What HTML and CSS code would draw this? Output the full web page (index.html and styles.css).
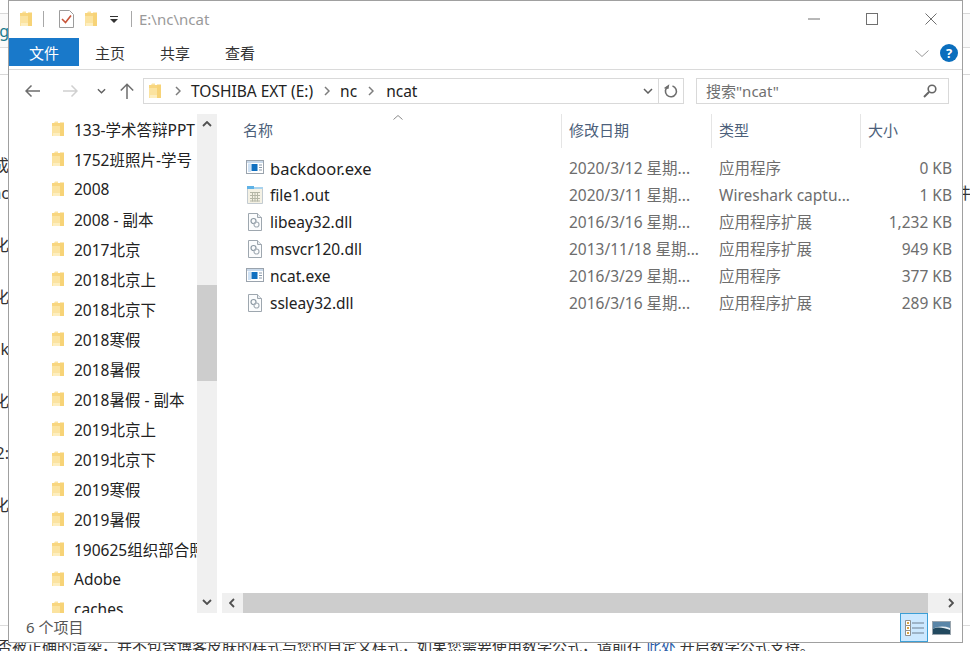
FILE: index.html
```html
<!DOCTYPE html>
<html lang="zh-CN">
<head>
<meta charset="utf-8">
<title>ncat</title>
<link rel="stylesheet" href="styles.css">
</head>
<body>
<svg class="defs" width="0" height="0" aria-hidden="true">
  <symbol id="folder" viewBox="0 0 12 16">
    <path d="M0 2h2l1-1.500h3v1.500h6v13H0z" fill="#fbe3a0"/>
    <path d="M0 2h12v3H0z" fill="#f8d680"/>
    <path d="M8 1.500h4V15H8z" fill="#f7d377"/>
    <path d="M1 12h7v3H1z" fill="#fdeebf"/>
  </symbol>
  <symbol id="exe" viewBox="0 0 18 14">
    <rect x=".5" y=".5" width="17" height="13" fill="#fff" stroke="#9aa3ad"/>
    <rect x="1" y="1" width="16" height="2" fill="#c9d9ea"/>
    <rect x="2" y="3.500" width="3" height="8.500" fill="#cfe2f5"/>
    <rect x="5.500" y="4" width="6" height="7" fill="#0f6fc0"/>
    <path d="M13 5h3M13 7.500h3M13 10h3" stroke="#8a98a8"/>
  </symbol>
  <symbol id="out" viewBox="0 0 16 18">
    <path d="M.5 2.500h15v15H.5z" fill="#f4f1e4" stroke="#c3cbd1"/>
    <rect x="0" y="0" width="7" height="3" fill="#5fb2e6"/>
    <rect x="7" y="1" width="9" height="2" fill="#a9d3ee"/>
    <path d="M3 6.500h10M3 9.500h10M3 12.500h10M3 15h10M5.500 6v9.500M8 6v9.500M10.500 6v9.500" stroke="#b4b6a6"/>
  </symbol>
  <symbol id="dll" viewBox="0 0 14 18">
    <path d="M.5.500h9l4 4v13H.5z" fill="#fbfcfd" stroke="#9ea7af"/>
    <path d="M9.500.500v4h4" fill="#e8ecef" stroke="#9ea7af"/>
    <circle cx="5.500" cy="8" r="2.500" fill="none" stroke="#8c98a3" stroke-width="1.200"/>
    <circle cx="8.500" cy="11.500" r="2.500" fill="none" stroke="#a7b0b8" stroke-width="1.200"/>
  </symbol>
  <symbol id="chev-r" viewBox="0 0 6 10"><path d="M1 1l4 4-4 4" fill="none" stroke="#7d7d7d" stroke-width="1.500"/></symbol>
  <symbol id="chev-d" viewBox="0 0 10 6"><path d="M1 1l4 4 4-4" fill="none" stroke="#5f5f5f" stroke-width="1.500"/></symbol>
</svg>

<div class="doc">
  <div class="doc-top"></div>
  <div class="doc-band"><span class="clip-left clip-g">g</span></div>
  <div class="doc-gap"></div>
  <div class="doc-lines">
    <div class="doc-line"><span class="clip-left">成</span></div>
    <div class="doc-line doc-tight"><span class="clip-left">nc</span><span class="clip-right">件</span></div>
    <div class="doc-line"><span class="clip-left">化</span></div>
    <div class="doc-line"><span class="clip-left">化</span></div>
    <div class="doc-line"><span class="clip-left">k</span></div>
    <div class="doc-line"><span class="clip-left">化</span></div>
    <div class="doc-line"><span class="clip-left">2:</span></div>
    <div class="doc-line"><span class="clip-left">化</span></div>
  </div>
  <div class="doc-foot">否被正确的渲染，并不包含博客皮肤的样式与您的自定义样式，如果您需要使用数学公式，请前往 <a class="doc-link">此处</a> 开启数学公式支持。</div>
</div>

<main class="win">
  <header class="titlebar">
    <svg class="ic-folder-t"><use href="#folder"/></svg>
    <span class="tb-sep tb-sep-a"></span>
    <svg class="ic-check" viewBox="0 0 15 18">
      <path d="M.5.500h10l4 4v13H.5z" fill="#fff" stroke="#9c9c9c"/>
      <path d="M3 9l3.500 3.500L12 5.500" fill="none" stroke="#c8553a" stroke-width="1.600"/>
    </svg>
    <svg class="ic-folder-t ic-folder-b"><use href="#folder"/></svg>
    <svg class="ic-qat" viewBox="0 0 8 7"><path d="M0 .500h8" stroke="#333"/><path d="M0 3h8L4 7z" fill="#333"/></svg>
    <span class="tb-sep tb-sep-b"></span>
    <span class="win-title">E:\nc\ncat</span>
    <svg class="ctl ctl-min" viewBox="0 0 12 12"><path d="M0 6h12" stroke="#707070"/></svg>
    <svg class="ctl ctl-max" viewBox="0 0 12 12"><rect x=".5" y=".5" width="11" height="11" fill="none" stroke="#707070"/></svg>
    <svg class="ctl ctl-close" viewBox="0 0 12 12"><path d="M.5.500l11 11M11.500.500l-11 11" stroke="#707070"/></svg>
  </header>

  <nav class="ribbon">
    <span class="tab tab-file">文件</span>
    <span class="tab">主页</span>
    <span class="tab">共享</span>
    <span class="tab">查看</span>
    <svg class="rb-chev" viewBox="0 0 14 7"><path d="M.5.500L7 6.500l6.500-6" fill="none" stroke="#9a9a9a"/></svg>
    <span class="help">?</span>
  </nav>

  <section class="toolbar">
    <svg class="nav nav-back" viewBox="0 0 15 12"><path d="M15 6H1M6.500.500L1 6l5.500 5.500" fill="none" stroke="#6d6d6d" stroke-width="1.500"/></svg>
    <svg class="nav nav-fwd" viewBox="0 0 15 12"><path d="M0 6h14M8.500.500L14 6l-5.500 5.500" fill="none" stroke="#d0d0d0" stroke-width="1.500"/></svg>
    <svg class="nav nav-down"><use href="#chev-d"/></svg>
    <svg class="nav nav-up" viewBox="0 0 14 16"><path d="M7 16V1.500M.8 7.500L7 1.200l6.200 6.300" fill="none" stroke="#6d6d6d" stroke-width="1.500"/></svg>
    <div class="address">
      <svg class="addr-folder"><use href="#folder"/></svg>
      <svg class="crumb-chev"><use href="#chev-r"/></svg>
      <span class="crumb">TOSHIBA EXT (E:)</span>
      <svg class="crumb-chev crumb-chev-mid"><use href="#chev-r"/></svg>
      <span class="crumb">nc</span>
      <svg class="crumb-chev crumb-chev-mid"><use href="#chev-r"/></svg>
      <span class="crumb crumb-last">ncat</span>
      <svg class="addr-drop"><use href="#chev-d"/></svg>
      <span class="addr-refresh">
        <svg class="refresh" viewBox="0 0 14 14"><path d="M8.500 2A5.500 5.500 0 1 1 4 2.600" fill="none" stroke="#6d6d6d" stroke-width="1.600"/><path d="M4.800 0v5H0z" fill="#6d6d6d" transform="rotate(10 4 3)"/></svg>
      </span>
    </div>
    <div class="search">
      <span class="search-text">搜索"ncat"</span>
      <svg class="search-ic" viewBox="0 0 14 14"><circle cx="9" cy="5" r="3.800" fill="none" stroke="#666" stroke-width="1.600"/><path d="M6 8l-5 5" stroke="#666" stroke-width="2"/></svg>
    </div>
  </section>

  <div class="panes">
    <aside class="tree">
      <ul class="tree-list">
        <li class="tree-row"><svg class="tree-ic"><use href="#folder"/></svg><span>133-学术答辩PPT</span></li>
        <li class="tree-row"><svg class="tree-ic"><use href="#folder"/></svg><span>1752班照片-学号</span></li>
        <li class="tree-row"><svg class="tree-ic"><use href="#folder"/></svg><span>2008</span></li>
        <li class="tree-row"><svg class="tree-ic"><use href="#folder"/></svg><span>2008 - 副本</span></li>
        <li class="tree-row"><svg class="tree-ic"><use href="#folder"/></svg><span>2017北京</span></li>
        <li class="tree-row"><svg class="tree-ic"><use href="#folder"/></svg><span>2018北京上</span></li>
        <li class="tree-row"><svg class="tree-ic"><use href="#folder"/></svg><span>2018北京下</span></li>
        <li class="tree-row"><svg class="tree-ic"><use href="#folder"/></svg><span>2018寒假</span></li>
        <li class="tree-row"><svg class="tree-ic"><use href="#folder"/></svg><span>2018暑假</span></li>
        <li class="tree-row"><svg class="tree-ic"><use href="#folder"/></svg><span>2018暑假 - 副本</span></li>
        <li class="tree-row"><svg class="tree-ic"><use href="#folder"/></svg><span>2019北京上</span></li>
        <li class="tree-row"><svg class="tree-ic"><use href="#folder"/></svg><span>2019北京下</span></li>
        <li class="tree-row"><svg class="tree-ic"><use href="#folder"/></svg><span>2019寒假</span></li>
        <li class="tree-row"><svg class="tree-ic"><use href="#folder"/></svg><span>2019暑假</span></li>
        <li class="tree-row"><svg class="tree-ic"><use href="#folder"/></svg><span>190625组织部合照</span></li>
        <li class="tree-row"><svg class="tree-ic"><use href="#folder"/></svg><span>Adobe</span></li>
        <li class="tree-row"><svg class="tree-ic"><use href="#folder"/></svg><span>caches</span></li>
      </ul>
      <div class="vscroll">
        <svg class="sb-arrow" viewBox="0 0 10 6"><path d="M1 5l4-4 4 4" fill="none" stroke="#505050" stroke-width="1.800"/></svg>
        <div class="vthumb"></div>
        <svg class="sb-arrow" viewBox="0 0 10 6"><path d="M1 1l4 4 4-4" fill="none" stroke="#505050" stroke-width="1.800"/></svg>
      </div>
    </aside>

    <section class="files">
      <div class="file-grid">
        <div class="hdr hdr-name">名称<svg class="sort" viewBox="0 0 10 5"><path d="M.5 4.500L5 .5l4.500 4" fill="none" stroke="#8a8a8a"/></svg></div>
        <div class="hdr">修改日期</div>
        <div class="hdr">类型</div>
        <div class="hdr hdr-last">大小</div>

        <div class="cell cell-name"><svg class="fi fi-exe"><use href="#exe"/></svg><span class="name-wide">backdoor.exe</span></div>
        <div class="cell">2020/3/12 星期...</div><div class="cell">应用程序</div><div class="cell cell-size">0 KB</div>

        <div class="cell cell-name"><svg class="fi fi-out"><use href="#out"/></svg>file1.out</div>
        <div class="cell">2020/3/11 星期...</div><div class="cell">Wireshark captu...</div><div class="cell cell-size">1 KB</div>

        <div class="cell cell-name"><svg class="fi fi-dll"><use href="#dll"/></svg>libeay32.dll</div>
        <div class="cell">2016/3/16 星期...</div><div class="cell">应用程序扩展</div><div class="cell cell-size">1,232 KB</div>

        <div class="cell cell-name"><svg class="fi fi-dll"><use href="#dll"/></svg>msvcr120.dll</div>
        <div class="cell">2013/11/18 星期...</div><div class="cell">应用程序扩展</div><div class="cell cell-size">949 KB</div>

        <div class="cell cell-name"><svg class="fi fi-exe"><use href="#exe"/></svg>ncat.exe</div>
        <div class="cell">2016/3/29 星期...</div><div class="cell">应用程序</div><div class="cell cell-size">377 KB</div>

        <div class="cell cell-name"><svg class="fi fi-dll"><use href="#dll"/></svg>ssleay32.dll</div>
        <div class="cell">2016/3/16 星期...</div><div class="cell">应用程序扩展</div><div class="cell cell-size">289 KB</div>
      </div>
      <div class="hscroll">
        <svg class="hs-arrow" viewBox="0 0 6 10"><path d="M5 1L1 5l4 4" fill="none" stroke="#505050" stroke-width="1.800"/></svg>
        <div class="hthumb"></div>
        <svg class="hs-arrow" viewBox="0 0 6 10"><path d="M1 1l4 4-4 4" fill="none" stroke="#505050" stroke-width="1.800"/></svg>
      </div>
    </section>
  </div>

  <footer class="status">
    <span class="status-text">6 个项目</span>
    <span class="view view-details">
      <svg class="view-ic" viewBox="0 0 19 16"><path d="M.5.500h5v5h-5zM.5 5.500h5v5h-5zM.5 10.500h5v5h-5z" fill="#fff" stroke="#8f8f8f"/><path d="M2 2h2v2H2zM2 7h2v2H2zM2 12h2v2H2z" fill="#d9a441"/><path d="M7 3h12M7 8h12M7 13h12" stroke="#6f7f8f"/></svg>
    </span>
    <span class="view view-thumb">
      <svg class="view-ic" viewBox="0 0 19 14"><rect x=".5" y=".5" width="18" height="13" fill="#e8f0f6" stroke="#9aa5ae"/><path d="M1 1h17v6C12 5 6 5 1 8z" fill="#5a86a8"/><path d="M1 8c5-3 11-1 17 1v4H1z" fill="#22495f"/></svg>
    </span>
  </footer>
</main>
</body>
</html>
```
FILE: styles.css
```css
* { box-sizing: border-box; }
html, body { margin: 0; height: 100%; }
body {
  position: relative;
  width: 970px;
  height: 651px;
  overflow: hidden;
  background: #fff;
  font-family: "Noto Sans", "Noto Sans CJK SC", sans-serif;
  color: #222;
}
.defs { position: absolute; }

/* page behind the window */
.doc { width: 970px; height: 651px; display: flex; flex-direction: column; overflow: hidden; font-size: 16px; color: #333; }
.doc-top { height: 14px; border-bottom: 1px solid #d8d8d8; flex: none; }
.doc-band { height: 34px; flex: none; background: #fafafa; border-bottom: 1px solid #dcdcdc; padding-top: 6px; display: flex; }
.doc-gap { height: 27px; flex: none; border-bottom: 1px solid #d8d8d8; }
.doc-lines { flex: 1; padding-top: 77px; display: flex; flex-direction: column; gap: 26px; border-bottom: 1px solid #dcdcdc; }
.doc-line { height: 26px; line-height: 26px; display: flex; justify-content: space-between; flex: none; }
.doc-tight { margin-top: -24px; }
.clip-left { width: 9px; display: flex; justify-content: flex-end; overflow: hidden; white-space: nowrap; color: #333; }
.clip-g { color: #1a7a8c; }
.clip-right { width: 16px; margin-right: -1px; }
.doc-foot { height: 25px; flex: none; padding-top: 10px; font-size: 15px; line-height: 20px; white-space: nowrap; margin-left: -3px; }
.doc-link { color: #2a5ca8; }

/* explorer window */
.win {
  position: absolute;
  left: 8px;
  top: 0;
  width: 955px;
  height: 643px;
  background: #fff;
  border: 1px solid #a0a0a0;
  display: flex;
  flex-direction: column;
  overflow: hidden;
  font-size: 15.500px;
}
.titlebar { height: 37px; flex: none; display: flex; align-items: center; padding: 0 0 1px 11px; }
.ic-folder-t { width: 12px; height: 16px; flex: none; }
.ic-folder-b { margin-left: 11px; }
.tb-sep { width: 1px; height: 16px; background: #a8a8a8; flex: none; }
.tb-sep-a { margin-left: 11px; }
.ic-check { width: 15px; height: 18px; flex: none; margin-left: 15px; }
.ic-qat { width: 8px; height: 7px; flex: none; margin-left: 13px; }
.tb-sep-b { margin-left: 13px; }
.win-title { margin-left: 7px; color: #9a9a9a; font-size: 15px; flex: 1; }
.ctl { width: 12px; height: 12px; flex: none; }
.ctl-max { margin-left: 46px; }
.ctl-close { margin-left: 47px; margin-right: 25px; }

.ribbon { height: 32px; flex: none; display: flex; align-items: flex-start; border-bottom: 1px solid #dadada; }
.tab { height: 28px; line-height: 30px; margin-left: 17px; margin-right: 18px; color: #333; white-space: nowrap; font-size: 15px; }
.tab-file { width: 70px; margin: 0 -1px 0 0; text-align: center; background: #1979ca; color: #fff; }
.rb-chev { width: 14px; height: 7px; margin-left: auto; margin-top: 12px; }
.help {
  width: 18px; height: 18px; border-radius: 50%;
  background: #0a6ebd; color: #fff; font-size: 13px; font-weight: 700;
  display: flex; align-items: center; justify-content: center;
  margin: 6px 4px 0 11px;
}

.toolbar { height: 44px; flex: none; display: flex; align-items: center; padding-bottom: 3px; }
.nav { flex: none; }
.nav-back { width: 15px; height: 12px; margin-left: 16px; }
.nav-fwd { width: 15px; height: 12px; margin-left: 23px; }
.nav-down { width: 9px; height: 6px; margin-left: 19px; }
.nav-up { width: 14px; height: 16px; margin-left: 14px; }
.address {
  width: 541px; height: 26px; margin-left: 9px; flex: none;
  border: 1px solid #d9d9d9;
  display: flex; align-items: center;
  color: #222;
}
.addr-folder { width: 12px; height: 16px; margin-left: 5px; flex: none; }
.crumb-chev { width: 6px; height: 10px; flex: none; margin-left: 14px; }
.crumb-chev-mid { margin-left: 11px; }
.crumb { margin-left: 10px; white-space: nowrap; }
.crumb-last { margin-left: 12px; }
.addr-drop { width: 10px; height: 6px; margin-left: auto; margin-right: 5px; flex: none; }
.addr-refresh { width: 25px; height: 24px; border-left: 1px solid #d9d9d9; display: flex; align-items: center; justify-content: center; flex: none; }
.refresh { width: 14px; height: 14px; }
.search {
  width: 253px; height: 26px; margin-left: 12px; flex: none;
  border: 1px solid #d9d9d9;
  display: flex; align-items: center; justify-content: space-between;
  padding: 0 11px 0 9px;
}
.search-text { color: #707070; font-size: 15px; }
.search-ic { width: 14px; height: 14px; }

.panes { flex: 1; min-height: 0; display: flex; }
.tree { width: 208px; flex: none; display: flex; }
.tree-list { flex: 1; min-width: 0; margin: 0; padding: 0; list-style: none; overflow: hidden; }
.tree-row { height: 30px; display: flex; align-items: center; padding-left: 43px; white-space: nowrap; color: #222; }
.tree-ic { width: 12px; height: 16px; flex: none; margin-right: 10px; }
.vscroll { width: 20px; flex: none; background: #f0f0f0; display: flex; flex-direction: column; align-items: center; padding: 7px 0 8px; }
.vthumb { width: 20px; height: 96px; background: #cdcdcd; margin: 158px 0 auto; }
.sb-arrow { width: 10px; height: 6px; flex: none; }

.files { flex: 1; min-width: 0; display: flex; flex-direction: column; }
.file-grid {
  flex: 1;
  display: grid;
  grid-template-columns: 345px 150px 149px 1fr;
  grid-template-rows: 41px;
  grid-auto-rows: 27px;
  align-content: start;
}
.hdr { height: 34px; border-right: 1px solid #e5e5e5; padding-left: 7px; line-height: 32px; color: #4c607a; white-space: nowrap; position: relative; font-size: 15px; }
.hdr-name { padding-left: 26px; }
.hdr-last { border-right: 0; }
.sort { position: absolute; left: 176px; top: 1px; width: 10px; height: 5px; }
.cell { height: 27px; line-height: 27px; padding-left: 7px; color: #6d6d6d; white-space: nowrap; overflow: hidden; display: flex; align-items: center; }
.cell-name { color: #222; position: relative; padding-left: 53px; }
.name-wide { font-size: 16.500px; }
.cell-size { justify-content: flex-end; padding-right: 10px; }
.fi { position: absolute; }
.fi-exe { width: 18px; height: 14px; left: 29px; top: 5px; }
.fi-out { width: 16px; height: 18px; left: 30px; top: 4px; }
.fi-dll { width: 14px; height: 18px; left: 31px; top: 4px; }
.hscroll { height: 20px; flex: none; margin-left: 5px; background: #f0f0f0; display: flex; align-items: center; }
.hs-arrow { width: 6px; height: 10px; flex: none; margin: 0 7px; }
.hthumb { flex: 1; height: 20px; background: #cdcdcd; margin: 0 10px 0 1px; }
.hs-arrow:last-child { margin: 0 8px 0 10px; }

.status { height: 29px; flex: none; display: flex; align-items: stretch; }
.status-text { flex: 1; padding-left: 17px; line-height: 28px; color: #555; font-size: 15px; }
.view { display: flex; align-items: center; justify-content: center; flex: none; }
.view-details { width: 28px; background: #cce8ff; border: 1px solid #3c9fd6; }
.view-thumb { width: 24px; margin: 0 9px 0 1px; }
.view-ic { width: 19px; height: 16px; }
```
